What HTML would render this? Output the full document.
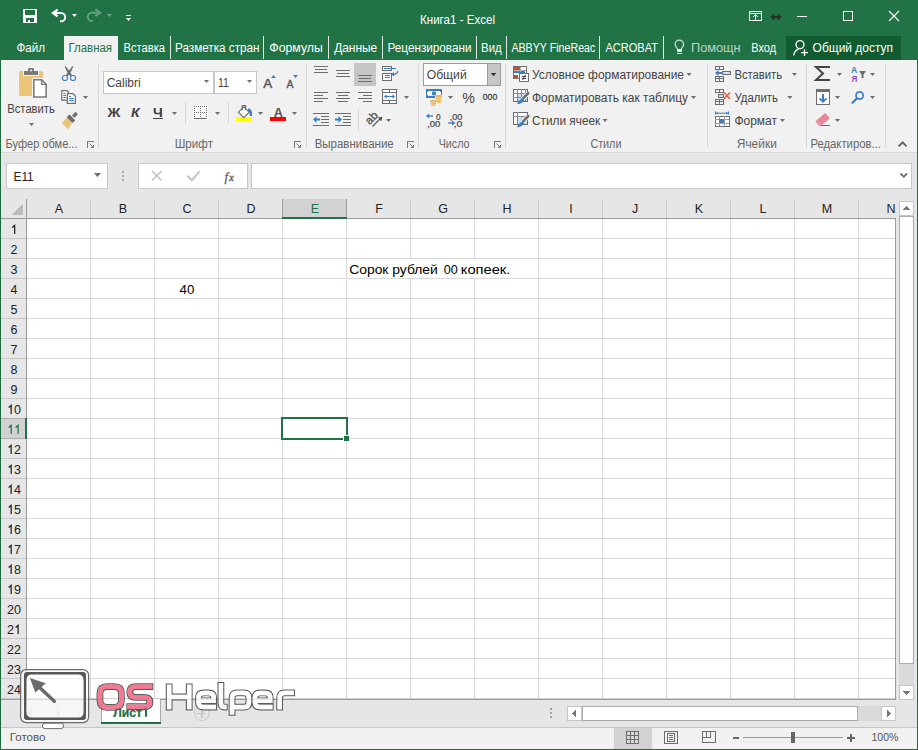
<!DOCTYPE html>
<html><head><meta charset="utf-8"><style>
html,body{margin:0;padding:0;width:918px;height:750px;overflow:hidden;background:#fff}
svg{display:block}
text{font-family:'Liberation Sans', sans-serif;white-space:pre}
</style></head><body>
<svg width="918" height="750" viewBox="0 0 918 750" shape-rendering="crispEdges">
<rect x="0" y="0" width="918" height="60" fill="#217346" />
<rect x="1" y="60" width="916" height="92" fill="#F1F1F1" />
<rect x="1" y="152" width="916" height="1" fill="#D6D6D6" />
<rect x="1" y="153" width="916" height="46" fill="#E6E6E6" />
<rect x="1" y="199" width="916" height="20" fill="#E6E6E6" />
<rect x="1" y="219" width="916" height="480" fill="#E6E6E6" />
<rect x="1" y="699" width="916" height="28" fill="#E6E6E6" />
<rect x="1" y="727" width="916" height="1" fill="#C6C6C6" />
<rect x="1" y="728" width="916" height="21" fill="#F1F1F1" />
<rect x="0" y="60" width="1" height="690" fill="#1E6B40" />
<rect x="917" y="60" width="1" height="690" fill="#1E6B40" />
<rect x="0" y="749" width="918" height="1" fill="#1E6B40" />
<text x="420" y="24" font-size="12" fill="#fff" textLength="75" lengthAdjust="spacingAndGlyphs" >Книга1 - Excel</text>
<rect x="64" y="36" width="54" height="24" fill="#F1F1F1" />
<text x="16.5" y="52" font-size="12" fill="#fff" textLength="28.5" lengthAdjust="spacingAndGlyphs" >Файл</text>
<text x="68.5" y="52" font-size="12" fill="#217346" textLength="43.5" lengthAdjust="spacingAndGlyphs" >Главная</text>
<text x="123.5" y="52" font-size="12" fill="#fff" textLength="41.5" lengthAdjust="spacingAndGlyphs" >Вставка</text>
<text x="175" y="52" font-size="12" fill="#fff" textLength="84.5" lengthAdjust="spacingAndGlyphs" >Разметка стран</text>
<text x="269.3" y="52" font-size="12" fill="#fff" textLength="53.5" lengthAdjust="spacingAndGlyphs" >Формулы</text>
<text x="334.2" y="52" font-size="12" fill="#fff" textLength="43" lengthAdjust="spacingAndGlyphs" >Данные</text>
<text x="387.5" y="52" font-size="12" fill="#fff" textLength="84" lengthAdjust="spacingAndGlyphs" >Рецензировани</text>
<text x="481" y="52" font-size="12" fill="#fff" textLength="20.8" lengthAdjust="spacingAndGlyphs" >Вид</text>
<text x="511.4" y="52" font-size="12" fill="#fff" textLength="84" lengthAdjust="spacingAndGlyphs" >ABBYY FineReac</text>
<text x="605.5" y="52" font-size="12" fill="#fff" textLength="52.5" lengthAdjust="spacingAndGlyphs" >ACROBAT</text>
<rect x="170" y="36" width="1" height="23" fill="rgba(255,255,255,0.85)" />
<rect x="263" y="36" width="1" height="23" fill="rgba(255,255,255,0.85)" />
<rect x="328" y="36" width="1" height="23" fill="rgba(255,255,255,0.85)" />
<rect x="382" y="36" width="1" height="23" fill="rgba(255,255,255,0.85)" />
<rect x="476" y="36" width="1" height="23" fill="rgba(255,255,255,0.85)" />
<rect x="506" y="36" width="1" height="23" fill="rgba(255,255,255,0.85)" />
<rect x="599" y="36" width="1" height="23" fill="rgba(255,255,255,0.85)" />
<rect x="663" y="36" width="1" height="23" fill="rgba(255,255,255,0.85)" />
<text x="691" y="52" font-size="12" fill="rgba(255,255,255,0.7)" textLength="49.5" lengthAdjust="spacingAndGlyphs" >Помощн</text>
<text x="751.3" y="52" font-size="12" fill="#fff" textLength="24.8" lengthAdjust="spacingAndGlyphs" >Вход</text>
<rect x="786" y="36" width="115" height="24" fill="#105C30" />
<text x="812.6" y="52" font-size="12" fill="#fff" textLength="80.5" lengthAdjust="spacingAndGlyphs" >Общий доступ</text>
<rect x="98" y="64" width="1" height="84" fill="#D8D8D8" />
<rect x="306" y="64" width="1" height="84" fill="#D8D8D8" />
<rect x="418" y="64" width="1" height="84" fill="#D8D8D8" />
<rect x="505" y="64" width="1" height="84" fill="#D8D8D8" />
<rect x="707" y="64" width="1" height="84" fill="#D8D8D8" />
<rect x="806" y="64" width="1" height="84" fill="#D8D8D8" />
<rect x="885" y="64" width="1" height="84" fill="#D8D8D8" />
<text x="5.5" y="148" font-size="12" fill="#666666" textLength="72" lengthAdjust="spacingAndGlyphs" >Буфер обме...</text>
<text x="174.7" y="148" font-size="12" fill="#666666" textLength="38.3" lengthAdjust="spacingAndGlyphs" >Шрифт</text>
<text x="314.7" y="148" font-size="12" fill="#666666" textLength="79" lengthAdjust="spacingAndGlyphs" >Выравнивание</text>
<text x="438.7" y="148" font-size="12" fill="#666666" textLength="30.8" lengthAdjust="spacingAndGlyphs" >Число</text>
<text x="590.4" y="148" font-size="12" fill="#666666" textLength="31" lengthAdjust="spacingAndGlyphs" >Стили</text>
<text x="736.8" y="148" font-size="12" fill="#666666" textLength="40" lengthAdjust="spacingAndGlyphs" >Ячейки</text>
<text x="810.4" y="148" font-size="12" fill="#666666" textLength="70.5" lengthAdjust="spacingAndGlyphs" >Редактиров...</text>
<text x="7.3" y="113" font-size="12" fill="#444444" textLength="47.5" lengthAdjust="spacingAndGlyphs" >Вставить</text>
<rect x="103" y="71" width="111" height="23" fill="#C6C6C6" />
<rect x="104" y="72" width="109" height="21" fill="#fff" />
<rect x="214" y="71" width="43" height="23" fill="#C6C6C6" />
<rect x="215" y="72" width="41" height="21" fill="#fff" />
<text x="106.7" y="87" font-size="12" fill="#444444" textLength="34" lengthAdjust="spacingAndGlyphs" >Calibri</text>
<text x="218" y="87" font-size="12" fill="#444444" textLength="11" lengthAdjust="spacingAndGlyphs" >11</text>
<rect x="423" y="63" width="78" height="23" fill="#9B9B9B" />
<rect x="424" y="64" width="63" height="21" fill="#fff" />
<rect x="488" y="64" width="12" height="21" fill="#C6C6C6" />
<text x="426.7" y="79" font-size="12" fill="#444444" textLength="40" lengthAdjust="spacingAndGlyphs" >Общий</text>
<text x="532" y="79" font-size="12" fill="#444444" textLength="152" lengthAdjust="spacingAndGlyphs" >Условное форматирование</text>
<text x="532" y="102" font-size="12" fill="#444444" textLength="156" lengthAdjust="spacingAndGlyphs" >Форматировать как таблицу</text>
<text x="532" y="125" font-size="12" fill="#444444" textLength="68.2" lengthAdjust="spacingAndGlyphs" >Стили ячеек</text>
<text x="734.4" y="79" font-size="12" fill="#444444" textLength="47.6" lengthAdjust="spacingAndGlyphs" >Вставить</text>
<text x="734.4" y="102" font-size="12" fill="#444444" textLength="43.6" lengthAdjust="spacingAndGlyphs" >Удалить</text>
<text x="734.4" y="125" font-size="12" fill="#444444" textLength="42.6" lengthAdjust="spacingAndGlyphs" >Формат</text>
<rect x="6" y="163" width="102" height="26" fill="#C6C6C6" />
<rect x="7" y="164" width="100" height="24" fill="#fff" />
<text x="13.5" y="181" font-size="12" fill="#222" textLength="20.2" lengthAdjust="spacingAndGlyphs" >E11</text>
<rect x="138" y="163" width="110" height="26" fill="#C6C6C6" />
<rect x="139" y="164" width="108" height="24" fill="#fff" />
<rect x="251" y="163" width="661" height="26" fill="#C6C6C6" />
<rect x="252" y="164" width="659" height="24" fill="#fff" />
<rect x="27" y="219" width="868" height="479" fill="#fff" />
<rect x="90" y="219" width="1" height="479" fill="#D9D9D9" />
<rect x="154" y="219" width="1" height="479" fill="#D9D9D9" />
<rect x="218" y="219" width="1" height="479" fill="#D9D9D9" />
<rect x="282" y="219" width="1" height="479" fill="#D9D9D9" />
<rect x="346" y="219" width="1" height="479" fill="#D9D9D9" />
<rect x="410" y="219" width="1" height="40" fill="#D9D9D9" />
<rect x="410" y="278" width="1" height="420" fill="#D9D9D9" />
<rect x="474" y="219" width="1" height="40" fill="#D9D9D9" />
<rect x="474" y="278" width="1" height="420" fill="#D9D9D9" />
<rect x="538" y="219" width="1" height="479" fill="#D9D9D9" />
<rect x="602" y="219" width="1" height="479" fill="#D9D9D9" />
<rect x="666" y="219" width="1" height="479" fill="#D9D9D9" />
<rect x="730" y="219" width="1" height="479" fill="#D9D9D9" />
<rect x="794" y="219" width="1" height="479" fill="#D9D9D9" />
<rect x="858" y="219" width="1" height="479" fill="#D9D9D9" />
<rect x="27" y="238" width="868" height="1" fill="#D9D9D9" />
<rect x="27" y="258" width="868" height="1" fill="#D9D9D9" />
<rect x="27" y="278" width="868" height="1" fill="#D9D9D9" />
<rect x="27" y="298" width="868" height="1" fill="#D9D9D9" />
<rect x="27" y="318" width="868" height="1" fill="#D9D9D9" />
<rect x="27" y="338" width="868" height="1" fill="#D9D9D9" />
<rect x="27" y="358" width="868" height="1" fill="#D9D9D9" />
<rect x="27" y="378" width="868" height="1" fill="#D9D9D9" />
<rect x="27" y="398" width="868" height="1" fill="#D9D9D9" />
<rect x="27" y="418" width="868" height="1" fill="#D9D9D9" />
<rect x="27" y="438" width="868" height="1" fill="#D9D9D9" />
<rect x="27" y="458" width="868" height="1" fill="#D9D9D9" />
<rect x="27" y="478" width="868" height="1" fill="#D9D9D9" />
<rect x="27" y="498" width="868" height="1" fill="#D9D9D9" />
<rect x="27" y="518" width="868" height="1" fill="#D9D9D9" />
<rect x="27" y="538" width="868" height="1" fill="#D9D9D9" />
<rect x="27" y="558" width="868" height="1" fill="#D9D9D9" />
<rect x="27" y="578" width="868" height="1" fill="#D9D9D9" />
<rect x="27" y="598" width="868" height="1" fill="#D9D9D9" />
<rect x="27" y="618" width="868" height="1" fill="#D9D9D9" />
<rect x="27" y="638" width="868" height="1" fill="#D9D9D9" />
<rect x="27" y="658" width="868" height="1" fill="#D9D9D9" />
<rect x="27" y="678" width="868" height="1" fill="#D9D9D9" />
<rect x="90" y="199" width="1" height="19" fill="#C8C8C8" />
<rect x="154" y="199" width="1" height="19" fill="#C8C8C8" />
<rect x="218" y="199" width="1" height="19" fill="#C8C8C8" />
<rect x="282" y="199" width="1" height="19" fill="#C8C8C8" />
<rect x="346" y="199" width="1" height="19" fill="#C8C8C8" />
<rect x="410" y="199" width="1" height="19" fill="#C8C8C8" />
<rect x="474" y="199" width="1" height="19" fill="#C8C8C8" />
<rect x="538" y="199" width="1" height="19" fill="#C8C8C8" />
<rect x="602" y="199" width="1" height="19" fill="#C8C8C8" />
<rect x="666" y="199" width="1" height="19" fill="#C8C8C8" />
<rect x="730" y="199" width="1" height="19" fill="#C8C8C8" />
<rect x="794" y="199" width="1" height="19" fill="#C8C8C8" />
<rect x="858" y="199" width="1" height="19" fill="#C8C8C8" />
<rect x="26" y="199" width="1" height="499" fill="#9B9B9B" />
<rect x="1" y="218" width="894" height="1" fill="#9B9B9B" />
<rect x="1" y="238" width="25" height="1" fill="#C8C8C8" />
<rect x="1" y="258" width="25" height="1" fill="#C8C8C8" />
<rect x="1" y="278" width="25" height="1" fill="#C8C8C8" />
<rect x="1" y="298" width="25" height="1" fill="#C8C8C8" />
<rect x="1" y="318" width="25" height="1" fill="#C8C8C8" />
<rect x="1" y="338" width="25" height="1" fill="#C8C8C8" />
<rect x="1" y="358" width="25" height="1" fill="#C8C8C8" />
<rect x="1" y="378" width="25" height="1" fill="#C8C8C8" />
<rect x="1" y="398" width="25" height="1" fill="#C8C8C8" />
<rect x="1" y="418" width="25" height="1" fill="#C8C8C8" />
<rect x="1" y="438" width="25" height="1" fill="#C8C8C8" />
<rect x="1" y="458" width="25" height="1" fill="#C8C8C8" />
<rect x="1" y="478" width="25" height="1" fill="#C8C8C8" />
<rect x="1" y="498" width="25" height="1" fill="#C8C8C8" />
<rect x="1" y="518" width="25" height="1" fill="#C8C8C8" />
<rect x="1" y="538" width="25" height="1" fill="#C8C8C8" />
<rect x="1" y="558" width="25" height="1" fill="#C8C8C8" />
<rect x="1" y="578" width="25" height="1" fill="#C8C8C8" />
<rect x="1" y="598" width="25" height="1" fill="#C8C8C8" />
<rect x="1" y="618" width="25" height="1" fill="#C8C8C8" />
<rect x="1" y="638" width="25" height="1" fill="#C8C8C8" />
<rect x="1" y="658" width="25" height="1" fill="#C8C8C8" />
<rect x="1" y="678" width="25" height="1" fill="#C8C8C8" />
<rect x="1" y="698" width="25" height="1" fill="#C8C8C8" />
<rect x="895" y="218" width="1" height="481" fill="#9B9B9B" />
<rect x="27" y="698" width="868" height="1" fill="#CFCFCF" />
<rect x="1" y="699" width="895" height="1" fill="#9B9B9B" />
<polygon points="11,215 23,215 23,203" fill="#BDBDBD"/>
<rect x="283" y="199" width="63" height="18" fill="#D2D2D2" />
<rect x="282" y="199" width="1" height="18" fill="#9B9B9B" />
<rect x="346" y="199" width="1" height="18" fill="#9B9B9B" />
<rect x="282" y="217" width="65" height="2" fill="#217346" />
<rect x="1" y="419" width="24" height="19" fill="#D2D2D2" />
<rect x="1" y="418" width="25" height="1" fill="#ABABAB" />
<rect x="1" y="438" width="25" height="1" fill="#ABABAB" />
<rect x="25" y="418" width="2" height="21" fill="#217346" />
<text x="59" y="213" font-size="12.5" fill="#222" text-anchor="middle" >A</text>
<text x="123" y="213" font-size="12.5" fill="#222" text-anchor="middle" >B</text>
<text x="187" y="213" font-size="12.5" fill="#222" text-anchor="middle" >C</text>
<text x="251" y="213" font-size="12.5" fill="#222" text-anchor="middle" >D</text>
<text x="315" y="213" font-size="12.5" fill="#217346" text-anchor="middle" >E</text>
<text x="379" y="213" font-size="12.5" fill="#222" text-anchor="middle" >F</text>
<text x="443" y="213" font-size="12.5" fill="#222" text-anchor="middle" >G</text>
<text x="507" y="213" font-size="12.5" fill="#222" text-anchor="middle" >H</text>
<text x="571" y="213" font-size="12.5" fill="#222" text-anchor="middle" >I</text>
<text x="635" y="213" font-size="12.5" fill="#222" text-anchor="middle" >J</text>
<text x="699" y="213" font-size="12.5" fill="#222" text-anchor="middle" >K</text>
<text x="763" y="213" font-size="12.5" fill="#222" text-anchor="middle" >L</text>
<text x="827" y="213" font-size="12.5" fill="#222" text-anchor="middle" >M</text>
<text x="891" y="213" font-size="12.5" fill="#222" text-anchor="middle" >N</text>
<path d="M14.65,234 V225.41 L12.15,227.54" fill="none" stroke="#222" stroke-width="1.25" shape-rendering="geometricPrecision"/>
<text x="10.52" y="254" font-size="12.5" fill="#222" >2</text>
<text x="10.52" y="274" font-size="12.5" fill="#222" >3</text>
<text x="10.52" y="294" font-size="12.5" fill="#222" >4</text>
<text x="10.52" y="314" font-size="12.5" fill="#222" >5</text>
<text x="10.52" y="334" font-size="12.5" fill="#222" >6</text>
<text x="10.52" y="354" font-size="12.5" fill="#222" >7</text>
<text x="10.52" y="374" font-size="12.5" fill="#222" >8</text>
<text x="10.52" y="394" font-size="12.5" fill="#222" >9</text>
<path d="M11.17,414 V405.41 L8.67,407.54" fill="none" stroke="#222" stroke-width="1.25" shape-rendering="geometricPrecision"/>
<text x="14.0" y="414" font-size="12.5" fill="#222" >0</text>
<path d="M11.17,434 V425.41 L8.67,427.54" fill="none" stroke="#217346" stroke-width="1.25" shape-rendering="geometricPrecision"/>
<path d="M18.12,434 V425.41 L15.62,427.54" fill="none" stroke="#217346" stroke-width="1.25" shape-rendering="geometricPrecision"/>
<path d="M11.17,454 V445.41 L8.67,447.54" fill="none" stroke="#222" stroke-width="1.25" shape-rendering="geometricPrecision"/>
<text x="14.0" y="454" font-size="12.5" fill="#222" >2</text>
<path d="M11.17,474 V465.41 L8.67,467.54" fill="none" stroke="#222" stroke-width="1.25" shape-rendering="geometricPrecision"/>
<text x="14.0" y="474" font-size="12.5" fill="#222" >3</text>
<path d="M11.17,494 V485.41 L8.67,487.54" fill="none" stroke="#222" stroke-width="1.25" shape-rendering="geometricPrecision"/>
<text x="14.0" y="494" font-size="12.5" fill="#222" >4</text>
<path d="M11.17,514 V505.41 L8.67,507.54" fill="none" stroke="#222" stroke-width="1.25" shape-rendering="geometricPrecision"/>
<text x="14.0" y="514" font-size="12.5" fill="#222" >5</text>
<path d="M11.17,534 V525.41 L8.67,527.54" fill="none" stroke="#222" stroke-width="1.25" shape-rendering="geometricPrecision"/>
<text x="14.0" y="534" font-size="12.5" fill="#222" >6</text>
<path d="M11.17,554 V545.41 L8.67,547.54" fill="none" stroke="#222" stroke-width="1.25" shape-rendering="geometricPrecision"/>
<text x="14.0" y="554" font-size="12.5" fill="#222" >7</text>
<path d="M11.17,574 V565.41 L8.67,567.54" fill="none" stroke="#222" stroke-width="1.25" shape-rendering="geometricPrecision"/>
<text x="14.0" y="574" font-size="12.5" fill="#222" >8</text>
<path d="M11.17,594 V585.41 L8.67,587.54" fill="none" stroke="#222" stroke-width="1.25" shape-rendering="geometricPrecision"/>
<text x="14.0" y="594" font-size="12.5" fill="#222" >9</text>
<text x="7.05" y="614" font-size="12.5" fill="#222" >2</text>
<text x="14.0" y="614" font-size="12.5" fill="#222" >0</text>
<text x="7.05" y="634" font-size="12.5" fill="#222" >2</text>
<path d="M18.12,634 V625.41 L15.62,627.54" fill="none" stroke="#222" stroke-width="1.25" shape-rendering="geometricPrecision"/>
<text x="7.05" y="654" font-size="12.5" fill="#222" >2</text>
<text x="14.0" y="654" font-size="12.5" fill="#222" >2</text>
<text x="7.05" y="674" font-size="12.5" fill="#222" >2</text>
<text x="14.0" y="674" font-size="12.5" fill="#222" >3</text>
<text x="7.05" y="694" font-size="12.5" fill="#222" >2</text>
<text x="14.0" y="694" font-size="12.5" fill="#222" >4</text>
<text x="349.2" y="274" font-size="13.5" fill="#000" textLength="88.6" lengthAdjust="spacingAndGlyphs" >Сорок рублей</text>
<text x="443.8" y="274" font-size="13.5" fill="#000" textLength="14" lengthAdjust="spacingAndGlyphs" >00</text>
<text x="460.8" y="274" font-size="13.5" fill="#000" textLength="49.6" lengthAdjust="spacingAndGlyphs" >копеек.</text>
<text x="179.6" y="294" font-size="13" fill="#000" textLength="14.8" lengthAdjust="spacingAndGlyphs" >40</text>
<rect x="281" y="417" width="67" height="2" fill="#217346" />
<rect x="281" y="417" width="2" height="23" fill="#217346" />
<rect x="346" y="417" width="2" height="18" fill="#217346" />
<rect x="281" y="438" width="62" height="2" fill="#217346" />
<rect x="343" y="435" width="7" height="7" fill="#fff" />
<rect x="344" y="436" width="5" height="5" fill="#217346" />
<rect x="899" y="201" width="15" height="15" fill="#C6C6C6" />
<rect x="900" y="202" width="13" height="13" fill="#fff" />
<polygon points="903,210 910,210 906.5,206" fill="#777"/>
<rect x="899" y="216" width="15" height="448" fill="#ABABAB" />
<rect x="900" y="217" width="13" height="446" fill="#fff" />
<rect x="899" y="664" width="15" height="21" fill="#DADADA" />
<rect x="899" y="685" width="15" height="15" fill="#C6C6C6" />
<rect x="900" y="686" width="13" height="13" fill="#fff" />
<polygon points="903,691 910,691 906.5,695" fill="#777"/>
<rect x="101" y="699" width="60" height="24" fill="#fff" />
<rect x="101" y="699" width="1" height="24" fill="#ABABAB" />
<rect x="160" y="699" width="1" height="24" fill="#ABABAB" />
<rect x="101" y="722" width="60" height="2" fill="#217346" />
<text x="113.2" y="716.8" font-size="13" fill="#1E6B3E" textLength="28.8" lengthAdjust="spacingAndGlyphs" font-weight="bold" stroke="#1E6B3E" stroke-width="0.2">Лист</text>
<path d="M146,716.8 V707.6 L143.3,709.6" fill="none" stroke="#1E6B3E" stroke-width="1.9" shape-rendering="geometricPrecision"/>
<circle cx="201.8" cy="713.3" r="7.3" fill="none" stroke="#C8C8C8" shape-rendering="geometricPrecision"/>
<rect x="197.3" y="712.7" width="9" height="1.3" fill="#C8C8C8"/><rect x="201.2" y="708.8" width="1.3" height="9" fill="#C8C8C8"/>
<polygon points="28.6,712.6 31.6,709.6 31.6,715.6" fill="#C8C8C8" shape-rendering="geometricPrecision"/><polygon points="60.2,712.6 57.2,709.6 57.2,715.6" fill="#C8C8C8" shape-rendering="geometricPrecision"/>
<rect x="550" y="708" width="2" height="2" fill="#A0A0A0" />
<rect x="550" y="712" width="2" height="2" fill="#A0A0A0" />
<rect x="550" y="716" width="2" height="2" fill="#A0A0A0" />
<rect x="567" y="706" width="15" height="15" fill="#C6C6C6" />
<rect x="568" y="707" width="13" height="13" fill="#fff" />
<polygon points="575.6,709.6 575.6,717.4 571.6,713.5" fill="#777"/>
<rect x="582" y="706" width="276" height="15" fill="#ABABAB" />
<rect x="583" y="707" width="274" height="13" fill="#fff" />
<rect x="858" y="706" width="23" height="15" fill="#DADADA" />
<rect x="881" y="706" width="15" height="15" fill="#C6C6C6" />
<rect x="882" y="707" width="13" height="13" fill="#fff" />
<polygon points="886.6,709.6 886.6,717.4 890.6,713.5" fill="#777"/>
<text x="9.8" y="740.8" font-size="11.3" fill="#555" textLength="35.6" lengthAdjust="spacingAndGlyphs" >Готово</text>
<rect x="614" y="728" width="38" height="21" fill="#D2D2D2" />
<text x="871.5" y="741" font-size="11.5" fill="#555" textLength="26.8" lengthAdjust="spacingAndGlyphs" >100%</text>
<rect x="743" y="737" width="100" height="1" fill="#999" />
<rect x="791" y="732" width="4" height="11" fill="#666" />
<rect x="733" y="737" width="6" height="2" fill="#666" />
<rect x="847" y="737" width="8" height="2" fill="#666" />
<rect x="850" y="734" width="2" height="8" fill="#666" />
<rect x="23" y="9" width="14" height="14" fill="#fff"/>
<rect x="25" y="10" width="10" height="5" fill="#217346"/>
<rect x="26" y="18" width="8" height="4" fill="#217346"/>
<rect x="28" y="20" width="2" height="2" fill="#fff"/>
<g shape-rendering="geometricPrecision"><path d="M57.6,9.6 L53,13 L57.6,16.4" fill="none" stroke="#fff" stroke-width="2.3" stroke-linejoin="miter"/><path d="M53.5,13 H61 A4.2,4.15 0 0 1 61,21.3 H60" fill="none" stroke="#fff" stroke-width="2"/></g>
<polygon points="72,14 77,14 74.5,17" fill="#fff" shape-rendering="geometricPrecision"/>
<g shape-rendering="geometricPrecision" opacity="0.3"><path d="M95.4,9.4 L100,12.8 L95.4,16.2" fill="none" stroke="#fff" stroke-width="2.3"/><path d="M99.5,12.8 H92 A4.2,4.15 0 0 0 92,21.1 H93" fill="none" stroke="#fff" stroke-width="2"/></g>
<polygon points="107,14 112,14 109.5,17" fill="rgba(255,255,255,0.35)" shape-rendering="geometricPrecision"/>
<rect x="126" y="15" width="5" height="1" fill="#fff"/>
<polygon points="126,18 131,18 128.5,21" fill="#fff" shape-rendering="geometricPrecision"/>
<rect x="749" y="11" width="13" height="1" fill="#fff"/><rect x="749" y="20" width="13" height="1" fill="#fff"/><rect x="749" y="11" width="1" height="10" fill="#fff"/><rect x="761" y="11" width="1" height="10" fill="#fff"/>
<rect x="749" y="13" width="13" height="1" fill="#fff"/>
<rect x="755" y="15" width="1" height="6" fill="#fff"/>
<path d="M753,17 L755.5,14.6 L758,17" fill="none" stroke="#fff" stroke-width="1" shape-rendering="geometricPrecision"/>
<g shape-rendering="geometricPrecision" fill="#2B2B2B"><polygon points="770.5,17 774.2,13.6 774.2,20.4"/><polygon points="781.5,17 777.8,13.6 777.8,20.4"/><rect x="773.5" y="16" width="5" height="2"/></g>
<rect x="797" y="16" width="10" height="1" fill="#fff"/>
<rect x="843.5" y="11.5" width="9" height="9" fill="none" stroke="#fff" stroke-width="1"/>
<path d="M889,11 L899,21 M899,11 L889,21" stroke="#fff" stroke-width="1.1" shape-rendering="geometricPrecision"/>
<g shape-rendering="geometricPrecision" fill="none" stroke="rgba(255,255,255,0.8)" stroke-width="1.2"><path d="M677.6,49.6 C677.3,47.6 675.1,46.6 675.1,44.4 A4.25,4.25 0 0 1 683.6,44.4 C683.6,46.6 681.4,47.6 681.1,49.6 Z"/></g>
<rect x="677.2" y="49.4" width="4.3" height="2.3" fill="rgba(255,255,255,0.8)"/><rect x="677.3" y="53" width="4.2" height="1.1" fill="rgba(255,255,255,0.8)"/>
<g shape-rendering="geometricPrecision" fill="none" stroke="#fff" stroke-width="1.3"><circle cx="800" cy="44.6" r="4"/><path d="M793.8,55.6 A7,7 0 0 1 798.6,49.1"/><path d="M804.5,49.2 V56 M801,52.6 H808"/></g>
<g shape-rendering="geometricPrecision"><rect x="19" y="71" width="24" height="25" rx="1.5" fill="#EBC47A"/><rect x="23" y="69.5" width="16" height="6.5" fill="#F4F4F4"/><rect x="24" y="71" width="14" height="4" fill="#7A7A7A"/><rect x="28" y="68" width="6" height="4" rx="1.2" fill="#7A7A7A"/><rect x="30.3" y="69.6" width="1.6" height="1.6" fill="#fff"/><rect x="32" y="78" width="16" height="21" fill="#F4F4F4"/><path d="M33.8,79.8 H41.6 L46.2,84.4 V97 H33.8 Z" fill="#fff" stroke="#7A7A7A" stroke-width="1.6"/><path d="M41.6,79.8 V84.4 H46.2" fill="none" stroke="#7A7A7A" stroke-width="1.4"/></g>
<polygon points="29,123 34,123 31.5,126" fill="#6D6D6D" shape-rendering="geometricPrecision"/>
<g shape-rendering="geometricPrecision"><path d="M64.6,66.6 Q65.4,65.9 65.9,66.4 Q69.5,70.5 72,75.3 L70.2,76.2 Q66.2,71.5 64.6,66.6 Z" fill="#6D6D6D"/><path d="M73.4,66.6 Q72.6,65.9 72.1,66.4 Q68.5,70.5 66,75.3 L67.8,76.2 Q71.8,71.5 73.4,66.6 Z" fill="#6D6D6D"/><circle cx="65" cy="78" r="2.55" fill="none" stroke="#4A7EBB" stroke-width="1.15"/><circle cx="73" cy="78" r="2.55" fill="none" stroke="#4A7EBB" stroke-width="1.15"/></g>
<g shape-rendering="geometricPrecision"><path d="M61.8,90.6 H67 L68.5,92 V100.2 H61.8 Z" fill="#fff" stroke="#6D6D6D" stroke-width="1.2"/><rect x="63.3" y="93" width="2.2" height="1" fill="#3C7EC1"/><rect x="63.3" y="95" width="3" height="1" fill="#3C7EC1"/><rect x="63.3" y="97" width="3" height="1" fill="#3C7EC1"/><path d="M67.4,93.6 H73 L75.4,96 V103.4 H67.4 Z" fill="#fff" stroke="#6D6D6D" stroke-width="1.2"/><rect x="69" y="96" width="2.2" height="1" fill="#3C7EC1"/><rect x="69" y="98" width="4.8" height="1" fill="#3C7EC1"/><rect x="69" y="100" width="4.8" height="1" fill="#3C7EC1"/></g>
<polygon points="83,96 88,96 85.5,99" fill="#6D6D6D" shape-rendering="geometricPrecision"/>
<g shape-rendering="geometricPrecision" transform="translate(71,118.8) rotate(-45)"><polygon points="-2.2,-3.8 -2.2,3.8 -9.6,5.6 -9.6,-3.6" fill="#EAC37A"/><rect x="-2" y="-4.2" width="4" height="8.4" rx="1" fill="#6D6D6D"/><rect x="3" y="-1.7" width="5.2" height="3.4" rx="0.8" fill="#6D6D6D"/></g>
<polygon points="204,80 209,80 206.5,83" fill="#6D6D6D" shape-rendering="geometricPrecision"/>
<polygon points="247,80 252,80 249.5,83" fill="#6D6D6D" shape-rendering="geometricPrecision"/>
<text x="263.2" y="88" font-size="13.5" fill="#555" stroke="#555" stroke-width="0.45" textLength="9" lengthAdjust="spacingAndGlyphs">A</text>
<polygon points="271,78 276,78 273.5,75" fill="#3C7EC1" shape-rendering="geometricPrecision"/>
<text x="286.4" y="88" font-size="11" fill="#555" stroke="#555" stroke-width="0.4" textLength="7" lengthAdjust="spacingAndGlyphs">A</text>
<polygon points="293,75 298,75 295.5,78" fill="#3C7EC1" shape-rendering="geometricPrecision"/>
<text x="107.5" y="117" font-size="13" font-weight="bold" fill="#404040" textLength="12.8" lengthAdjust="spacingAndGlyphs">Ж</text>
<text x="131" y="117" font-size="13" font-weight="bold" font-style="italic" fill="#404040" textLength="8.6" lengthAdjust="spacingAndGlyphs">К</text>
<text x="153" y="117" font-size="13" font-weight="bold" fill="#404040" textLength="9.8" lengthAdjust="spacingAndGlyphs">Ч</text>
<rect x="153" y="118" width="10" height="1" fill="#404040"/>
<polygon points="172,112 177,112 174.5,115" fill="#6D6D6D" shape-rendering="geometricPrecision"/>
<rect x="185" y="102" width="1" height="22" fill="#D8D8D8"/>
<rect x="228" y="102" width="1" height="22" fill="#D8D8D8"/>
<rect x="193" y="105" width="15" height="15" fill="#FAFAFA"/>
<rect x="194" y="106" width="1" height="1" fill="#6D6D6D"/>
<rect x="196" y="106" width="1" height="1" fill="#6D6D6D"/>
<rect x="198" y="106" width="1" height="1" fill="#6D6D6D"/>
<rect x="200" y="106" width="1" height="1" fill="#6D6D6D"/>
<rect x="202" y="106" width="1" height="1" fill="#6D6D6D"/>
<rect x="204" y="106" width="1" height="1" fill="#6D6D6D"/>
<rect x="206" y="106" width="1" height="1" fill="#6D6D6D"/>
<rect x="194" y="112" width="1" height="1" fill="#6D6D6D"/>
<rect x="196" y="112" width="1" height="1" fill="#6D6D6D"/>
<rect x="198" y="112" width="1" height="1" fill="#6D6D6D"/>
<rect x="200" y="112" width="1" height="1" fill="#6D6D6D"/>
<rect x="202" y="112" width="1" height="1" fill="#6D6D6D"/>
<rect x="204" y="112" width="1" height="1" fill="#6D6D6D"/>
<rect x="206" y="112" width="1" height="1" fill="#6D6D6D"/>
<rect x="194" y="108" width="1" height="1" fill="#6D6D6D"/>
<rect x="200" y="108" width="1" height="1" fill="#6D6D6D"/>
<rect x="206" y="108" width="1" height="1" fill="#6D6D6D"/>
<rect x="194" y="110" width="1" height="1" fill="#6D6D6D"/>
<rect x="200" y="110" width="1" height="1" fill="#6D6D6D"/>
<rect x="206" y="110" width="1" height="1" fill="#6D6D6D"/>
<rect x="194" y="114" width="1" height="1" fill="#6D6D6D"/>
<rect x="200" y="114" width="1" height="1" fill="#6D6D6D"/>
<rect x="206" y="114" width="1" height="1" fill="#6D6D6D"/>
<rect x="194" y="116" width="1" height="1" fill="#6D6D6D"/>
<rect x="200" y="116" width="1" height="1" fill="#6D6D6D"/>
<rect x="206" y="116" width="1" height="1" fill="#6D6D6D"/>
<rect x="194" y="118" width="13" height="1" fill="#6D6D6D"/>
<polygon points="215,112 220,112 217.5,115" fill="#6D6D6D" shape-rendering="geometricPrecision"/>
<rect x="236" y="117" width="16" height="4" fill="#FFFF00"/>
<g shape-rendering="geometricPrecision"><path d="M243.8,106.8 L249.2,112.2 L243.8,117.6 L238.4,112.2 Z" fill="#fff" stroke="#6D6D6D" stroke-width="1.1"/><path d="M242.2,110.5 V105.6 H245.6 V110" fill="none" stroke="#6D6D6D" stroke-width="1.2"/><path d="M248.2,108.2 Q253.2,109.5 252,116 L249.8,116 Q250.2,112.5 247.6,111.2 Z" fill="#3C7EC1"/></g>
<polygon points="258,112 263,112 260.5,115" fill="#6D6D6D" shape-rendering="geometricPrecision"/>
<rect x="270" y="117" width="16" height="4" fill="#FF0000"/>
<text x="273.8" y="116.6" font-size="13.5" font-weight="bold" fill="#555" textLength="9.2" lengthAdjust="spacingAndGlyphs">A</text>
<polygon points="292,112 297,112 294.5,115" fill="#6D6D6D" shape-rendering="geometricPrecision"/>
<rect x="354" y="63" width="22" height="23" fill="#C6C6C6"/>
<rect x="314" y="66" width="14" height="1" fill="#6D6D6D"/>
<rect x="315" y="69" width="12" height="1" fill="#6D6D6D"/>
<rect x="314" y="72" width="14" height="1" fill="#6D6D6D"/>
<rect x="336" y="70" width="14" height="1" fill="#6D6D6D"/>
<rect x="337" y="73" width="12" height="1" fill="#6D6D6D"/>
<rect x="336" y="76" width="14" height="1" fill="#6D6D6D"/>
<rect x="358" y="75" width="14" height="1" fill="#6D6D6D"/>
<rect x="359" y="78" width="12" height="1" fill="#6D6D6D"/>
<rect x="358" y="81" width="14" height="1" fill="#6D6D6D"/>
<rect x="382.5" y="66.5" width="9" height="4" fill="#fff" stroke="#6D6D6D" stroke-width="1"/>
<rect x="382.5" y="73.5" width="9" height="7" fill="#fff" stroke="#6D6D6D" stroke-width="1"/>
<rect x="384" y="68" width="12" height="1" fill="#3C7EC1"/>
<rect x="384.5" y="75" width="5" height="1" fill="#3C7EC1"/><rect x="384.5" y="77" width="5" height="1" fill="#3C7EC1"/>
<g shape-rendering="geometricPrecision"><path d="M397.6,71 Q397.6,74.3 393,74.3" fill="none" stroke="#3C7EC1" stroke-width="1.2"/><polygon points="391,74.3 394,72 394,76.6" fill="#3C7EC1"/></g>
<rect x="314" y="92" width="14" height="1" fill="#6D6D6D"/>
<rect x="314" y="95" width="9" height="1" fill="#6D6D6D"/>
<rect x="314" y="98" width="14" height="1" fill="#6D6D6D"/>
<rect x="314" y="101" width="9" height="1" fill="#6D6D6D"/>
<rect x="336" y="92" width="14" height="1" fill="#6D6D6D"/>
<rect x="338" y="95" width="10" height="1" fill="#6D6D6D"/>
<rect x="336" y="98" width="14" height="1" fill="#6D6D6D"/>
<rect x="338" y="101" width="10" height="1" fill="#6D6D6D"/>
<rect x="358" y="92" width="14" height="1" fill="#6D6D6D"/>
<rect x="363" y="95" width="9" height="1" fill="#6D6D6D"/>
<rect x="358" y="98" width="14" height="1" fill="#6D6D6D"/>
<rect x="363" y="101" width="9" height="1" fill="#6D6D6D"/>
<rect x="382" y="89" width="15" height="15" fill="#6D6D6D"/><rect x="383" y="90" width="13" height="2" fill="#fff"/><rect x="383" y="93" width="13" height="7" fill="#fff"/><rect x="383" y="101" width="13" height="2" fill="#fff"/>
<rect x="389" y="90" width="1" height="2" fill="#6D6D6D"/><rect x="389" y="101" width="1" height="2" fill="#6D6D6D"/>
<g shape-rendering="geometricPrecision" fill="#3C7EC1"><rect x="385.5" y="95.9" width="8" height="1.2"/><polygon points="384,96.5 386.5,94.3 386.5,98.7"/><polygon points="395,96.5 392.5,94.3 392.5,98.7"/></g>
<polygon points="404,96 409,96 406.5,99" fill="#6D6D6D" shape-rendering="geometricPrecision"/>
<rect x="313" y="113" width="16" height="1" fill="#6D6D6D"/><rect x="313" y="125" width="16" height="1" fill="#6D6D6D"/>
<rect x="321" y="116" width="8" height="1" fill="#6D6D6D"/>
<rect x="321" y="119" width="8" height="1" fill="#6D6D6D"/>
<rect x="321" y="122" width="8" height="1" fill="#6D6D6D"/>
<g shape-rendering="geometricPrecision" fill="#3C7EC1"><polygon points="313,119.5 316.5,116.3 316.5,122.7"/><rect x="316" y="118.5" width="4" height="2"/></g>
<rect x="335" y="113" width="16" height="1" fill="#6D6D6D"/><rect x="335" y="125" width="16" height="1" fill="#6D6D6D"/>
<rect x="343" y="116" width="8" height="1" fill="#6D6D6D"/>
<rect x="343" y="119" width="8" height="1" fill="#6D6D6D"/>
<rect x="343" y="122" width="8" height="1" fill="#6D6D6D"/>
<g shape-rendering="geometricPrecision" fill="#3C7EC1"><polygon points="342,119.5 338.5,116.3 338.5,122.7"/><rect x="335" y="118.5" width="4" height="2"/></g>
<rect x="358" y="109" width="1" height="22" fill="#D8D8D8"/>
<text x="0" y="0" font-size="11.5" fill="#505050" stroke="#505050" stroke-width="0.3" transform="translate(369.8,125.2) rotate(-47)">ab</text>
<g shape-rendering="geometricPrecision"><path d="M372.5,126.5 L381.5,117.5" stroke="#555" stroke-width="1.1"/><polygon points="382.3,116.7 377.8,117.6 381.4,121.2" fill="#555"/></g>
<polygon points="386,119 391,119 388.5,122" fill="#6D6D6D" shape-rendering="geometricPrecision"/>
<polygon points="490.7,73 496.3,73 493.5,76.3" fill="#333" shape-rendering="geometricPrecision"/>
<rect x="426" y="89" width="16" height="9" fill="#3C7EC1"/><rect x="428" y="91" width="12" height="5" fill="#fff"/><rect x="427" y="92" width="14" height="3" fill="#fff"/>
<circle cx="434" cy="93.4" r="2.2" fill="#3C7EC1" shape-rendering="geometricPrecision"/>
<rect x="434.5" y="94.5" width="8.5" height="9" fill="#F1F1F1"/><rect x="429.5" y="99.5" width="8" height="6.5" fill="#F1F1F1"/>
<g shape-rendering="geometricPrecision"><ellipse cx="438.6" cy="96.2" rx="3.6" ry="1.4" fill="#E8BD6A"/><ellipse cx="438.6" cy="98.6" rx="3.2" ry="1" fill="#E8BD6A"/><ellipse cx="438.8" cy="100.6" rx="3" ry="0.9" fill="#E8BD6A"/><ellipse cx="439" cy="102.3" rx="2.5" ry="0.8" fill="#E8BD6A"/>
<ellipse cx="433.4" cy="101.2" rx="3.6" ry="1.4" fill="#E8BD6A"/><ellipse cx="433.4" cy="103.4" rx="3.1" ry="0.9" fill="#E8BD6A"/><ellipse cx="433.4" cy="105.1" rx="2.8" ry="0.8" fill="#E8BD6A"/></g>
<polygon points="448,96 453,96 450.5,99" fill="#6D6D6D" shape-rendering="geometricPrecision"/>
<text x="462.3" y="103" font-size="14.5" fill="#444" textLength="12.6" lengthAdjust="spacingAndGlyphs">%</text>
<text x="482.8" y="100.3" font-size="9.6" fill="#444" stroke="#444" stroke-width="0.3" textLength="14.4" lengthAdjust="spacingAndGlyphs">000</text>
<text x="436" y="119.8" font-size="8.8" fill="#444" stroke="#444" stroke-width="0.2" lengthAdjust="spacingAndGlyphs" textLength="4.6">0</text>
<text x="427.2" y="126.8" font-size="8.8" fill="#444" stroke="#444" stroke-width="0.2" lengthAdjust="spacingAndGlyphs" textLength="13.2">,00</text>
<g shape-rendering="geometricPrecision" fill="#3C7EC1"><polygon points="426,116 429.2,113.4 429.2,118.6"/><rect x="428.5" y="115.4" width="4.5" height="1.3"/></g>
<text x="449.8" y="119.8" font-size="8.8" fill="#444" stroke="#444" stroke-width="0.2" lengthAdjust="spacingAndGlyphs" textLength="12.6">,00</text>
<text x="453.6" y="126.8" font-size="8.8" fill="#444" stroke="#444" stroke-width="0.2" lengthAdjust="spacingAndGlyphs" textLength="8.8">,0</text>
<g shape-rendering="geometricPrecision" fill="#3C7EC1"><polygon points="455.3,123 452,120.4 452,125.6"/><rect x="448" y="122.4" width="4.5" height="1.3"/></g>
<rect x="513.5" y="66.5" width="13" height="12" fill="#fff" stroke="#6D6D6D" stroke-width="1"/>
<rect x="514" y="67" width="6" height="3" fill="#D24726"/><rect x="514" y="71" width="11" height="2" fill="#3C7EC1"/><rect x="514" y="75" width="4" height="3" fill="#D24726"/>
<rect x="520" y="66.5" width="1" height="5" fill="#B0B0B0"/><rect x="514" y="70" width="12" height="1" fill="#B0B0B0"/>
<rect x="519.5" y="73.5" width="9" height="8" fill="#fff" stroke="#6D6D6D" stroke-width="1"/>
<g shape-rendering="geometricPrecision"><path d="M521.8,76.5 H526.2 M521.8,78.5 H526.2 M525.3,75 L522.7,80" stroke="#333" stroke-width="0.9"/></g>
<rect x="513.5" y="89.5" width="14" height="12" fill="#fff" stroke="#6D6D6D" stroke-width="1"/>
<rect x="517" y="93" width="10" height="8" fill="#C5DCF0"/>
<rect x="517" y="89" width="1" height="12" fill="#8A8A8A"/>
<rect x="521" y="89" width="1" height="12" fill="#8A8A8A"/>
<rect x="525" y="89" width="1" height="12" fill="#8A8A8A"/>
<rect x="513" y="93" width="14" height="1" fill="#8A8A8A"/>
<rect x="513" y="97" width="14" height="1" fill="#8A8A8A"/>
<g shape-rendering="geometricPrecision"><path d="M528.5,93 L522.5,99" stroke="#F1F1F1" stroke-width="4.5"/><path d="M528.3,93.2 L523.3,98.2" stroke="#6D6D6D" stroke-width="2.6" stroke-linecap="round"/><path d="M522.8,98.4 Q519.5,99 516.8,104.2 Q521.5,104 524.3,100.2 Z" fill="#3C7EC1"/></g>
<rect x="513.5" y="112.5" width="14" height="12" fill="#fff" stroke="#6D6D6D" stroke-width="1"/>
<rect x="517" y="116" width="10" height="8" fill="#C5DCF0"/>
<rect x="517" y="112" width="1" height="12" fill="#8A8A8A"/><rect x="513" y="116" width="14" height="1" fill="#8A8A8A"/>
<g shape-rendering="geometricPrecision"><path d="M528.5,116 L522.5,122" stroke="#F1F1F1" stroke-width="4.5"/><path d="M528.3,116.2 L523.3,121.2" stroke="#6D6D6D" stroke-width="2.6" stroke-linecap="round"/><path d="M522.8,121.4 Q519.5,122 516.8,127.2 Q521.5,127 524.3,123.2 Z" fill="#3C7EC1"/></g>
<polygon points="686.5,73 691.5,73 689.0,76" fill="#6D6D6D" shape-rendering="geometricPrecision"/>
<polygon points="691,96 696,96 693.5,99" fill="#6D6D6D" shape-rendering="geometricPrecision"/>
<polygon points="602.5,119 607.5,119 605.0,122" fill="#6D6D6D" shape-rendering="geometricPrecision"/>
<g fill="none" stroke="#6D6D6D" stroke-width="1"><rect x="715.5" y="66.5" width="8" height="3"/><rect x="719.5" y="66.5" width="0.01" height="3"/><rect x="715.5" y="76.5" width="8" height="5"/><rect x="715.5" y="78.5" width="8" height="0.01"/><rect x="719.5" y="76.5" width="0.01" height="5"/><rect x="722.5" y="71.5" width="8" height="3"/></g>
<rect x="723" y="72" width="3" height="2" fill="#C5DCF0"/><rect x="727" y="72" width="3" height="2" fill="#C5DCF0"/>
<g shape-rendering="geometricPrecision" fill="#3C7EC1"><polygon points="715,73 718.5,70 718.5,76"/><rect x="718" y="72" width="4.5" height="2"/></g>
<g fill="none" stroke="#6D6D6D" stroke-width="1"><rect x="715.5" y="89.5" width="8" height="3"/><rect x="719.5" y="89.5" width="0.01" height="3"/><rect x="715.5" y="99.5" width="8" height="5"/><rect x="715.5" y="101.5" width="8" height="0.01"/><rect x="719.5" y="99.5" width="0.01" height="5"/><rect x="718.5" y="94.5" width="5" height="3"/></g>
<rect x="719" y="95" width="4" height="2" fill="#C5DCF0"/>
<path d="M724,92.5 L730,99 M730,92.5 L724,99" stroke="#E0603A" stroke-width="1.6" shape-rendering="geometricPrecision"/>
<g shape-rendering="geometricPrecision"><rect x="716" y="112.7" width="12" height="1" fill="#3C7EC1"/><rect x="715" y="111.5" width="1" height="3" fill="#3C7EC1"/><rect x="728" y="111.5" width="1" height="3" fill="#3C7EC1"/><polygon points="716,113.2 718,111.8 718,114.6" fill="#3C7EC1"/><polygon points="728,113.2 726,111.8 726,114.6" fill="#3C7EC1"/></g>
<rect x="715.5" y="116.5" width="14" height="10" fill="#fff" stroke="#6D6D6D" stroke-width="1"/>
<rect x="719" y="116" width="1" height="10" fill="#A0A0A0"/>
<rect x="724" y="116" width="1" height="10" fill="#A0A0A0"/>
<rect x="715" y="119" width="14" height="1" fill="#A0A0A0"/>
<rect x="715" y="123" width="14" height="1" fill="#A0A0A0"/>
<rect x="719" y="119" width="5" height="4" fill="#3C7EC1"/>
<polygon points="792,73 797,73 794.5,76" fill="#6D6D6D" shape-rendering="geometricPrecision"/>
<polygon points="787.4,96 792.4,96 789.9,99" fill="#6D6D6D" shape-rendering="geometricPrecision"/>
<polygon points="780,119 785,119 782.5,122" fill="#6D6D6D" shape-rendering="geometricPrecision"/>
<path d="M830,67 H816 L823,73.5 L816,80 H830" fill="none" stroke="#444" stroke-width="2" stroke-linejoin="miter" shape-rendering="geometricPrecision"/>
<polygon points="837,73 842,73 839.5,76" fill="#6D6D6D" shape-rendering="geometricPrecision"/>
<text x="851" y="73" font-size="9" font-weight="bold" fill="#3C7EC1" textLength="6.2" lengthAdjust="spacingAndGlyphs">А</text>
<text x="851.5" y="82" font-size="9" font-weight="bold" fill="#8E4FB0" textLength="5.8" lengthAdjust="spacingAndGlyphs">Я</text>
<polygon points="859,71 866,71 863.5,74.5 863.5,78 861.5,78 861.5,74.5" fill="#6D6D6D" shape-rendering="geometricPrecision"/>
<polygon points="870,73 875,73 872.5,76" fill="#6D6D6D" shape-rendering="geometricPrecision"/>
<rect x="816.5" y="89.5" width="13" height="15" fill="#fff" stroke="#6D6D6D" stroke-width="1"/><rect x="816" y="89" width="14" height="3" fill="#6D6D6D"/>
<g shape-rendering="geometricPrecision"><path d="M823,94 V101" stroke="#3C7EC1" stroke-width="2"/><path d="M819.5,98.3 L823,101.8 L826.5,98.3" fill="none" stroke="#3C7EC1" stroke-width="1.8"/></g>
<polygon points="835,96 840,96 837.5,99" fill="#6D6D6D" shape-rendering="geometricPrecision"/>
<g shape-rendering="geometricPrecision"><circle cx="859.6" cy="95.5" r="3.6" fill="none" stroke="#3C7EC1" stroke-width="1.7"/><path d="M857,98.2 L852.5,102.7" stroke="#3C7EC1" stroke-width="2.2" stroke-linecap="round"/></g>
<polygon points="870,96 875,96 872.5,99" fill="#6D6D6D" shape-rendering="geometricPrecision"/>
<g shape-rendering="geometricPrecision" transform="translate(823,119.5) rotate(-40)"><rect x="-7" y="-3.5" width="13" height="7" rx="1" fill="#E8859A"/><rect x="-7" y="-3.5" width="3" height="7" fill="#E497A7"/></g>
<rect x="821" y="125" width="9" height="1" fill="#6D6D6D"/>
<polygon points="835,119 840,119 837.5,122" fill="#6D6D6D" shape-rendering="geometricPrecision"/>
<path d="M898.6,146.4 L902.6,142.4 L906.6,146.4" fill="none" stroke="#666" stroke-width="2" shape-rendering="geometricPrecision"/>
<path d="M87.5,148 V141.5 H93.5" fill="none" stroke="#7A7A7A" stroke-width="1"/>
<path d="M89.5,143.5 L93.5,147.5 M93.5,145 V147.5 H91" fill="none" stroke="#7A7A7A" stroke-width="1" shape-rendering="geometricPrecision"/>
<path d="M294.5,148 V141.5 H300.5" fill="none" stroke="#7A7A7A" stroke-width="1"/>
<path d="M296.5,143.5 L300.5,147.5 M300.5,145 V147.5 H298" fill="none" stroke="#7A7A7A" stroke-width="1" shape-rendering="geometricPrecision"/>
<path d="M407.5,148 V141.5 H413.5" fill="none" stroke="#7A7A7A" stroke-width="1"/>
<path d="M409.5,143.5 L413.5,147.5 M413.5,145 V147.5 H411" fill="none" stroke="#7A7A7A" stroke-width="1" shape-rendering="geometricPrecision"/>
<path d="M494.5,148 V141.5 H500.5" fill="none" stroke="#7A7A7A" stroke-width="1"/>
<path d="M496.5,143.5 L500.5,147.5 M500.5,145 V147.5 H498" fill="none" stroke="#7A7A7A" stroke-width="1" shape-rendering="geometricPrecision"/>
<polygon points="94,173 101,173 97.5,177" fill="#6D6D6D" shape-rendering="geometricPrecision"/>
<rect x="122" y="171" width="2" height="2" fill="#ABABAB"/>
<rect x="122" y="175" width="2" height="2" fill="#ABABAB"/>
<rect x="122" y="179" width="2" height="2" fill="#ABABAB"/>
<path d="M152,171 L161.5,180.5 M161.5,171 L152,180.5" stroke="#C4C4C4" stroke-width="1.7" shape-rendering="geometricPrecision"/>
<path d="M187.5,175.8 L191.8,180.2 L199.6,171.4" fill="none" stroke="#C4C4C4" stroke-width="2" shape-rendering="geometricPrecision"/>
<text x="224.5" y="180.5" font-size="13" font-style="italic" style="font-family:'Liberation Serif'" fill="#555" stroke="#555" stroke-width="0.25">f</text>
<text x="229.2" y="180.5" font-size="10" font-style="italic" style="font-family:'Liberation Serif'" fill="#555" stroke="#555" stroke-width="0.35">x</text>
<path d="M900.5,173.5 L903.8,176.8 L907,173.5" fill="none" stroke="#6D6D6D" stroke-width="1.8" shape-rendering="geometricPrecision"/>
<rect x="626" y="731" width="13" height="13" fill="#6D6D6D"/>
<rect x="627" y="732" width="3" height="3" fill="#D8D8D8"/>
<rect x="627" y="736" width="3" height="3" fill="#D8D8D8"/>
<rect x="627" y="740" width="3" height="3" fill="#D8D8D8"/>
<rect x="631" y="732" width="3" height="3" fill="#D8D8D8"/>
<rect x="631" y="736" width="3" height="3" fill="#D8D8D8"/>
<rect x="631" y="740" width="3" height="3" fill="#D8D8D8"/>
<rect x="635" y="732" width="3" height="3" fill="#D8D8D8"/>
<rect x="635" y="736" width="3" height="3" fill="#D8D8D8"/>
<rect x="635" y="740" width="3" height="3" fill="#D8D8D8"/>
<rect x="664.5" y="731.5" width="13" height="12" fill="none" stroke="#6D6D6D" stroke-width="1"/>
<rect x="667.5" y="733.5" width="7" height="8" fill="none" stroke="#6D6D6D" stroke-width="1"/>
<rect x="669" y="735" width="4" height="1" fill="#6D6D6D"/>
<rect x="669" y="737" width="4" height="1" fill="#6D6D6D"/>
<rect x="669" y="739" width="4" height="1" fill="#6D6D6D"/>
<path d="M702.5,742.5 V731.5 H715.5 V742.5 Z M702.5,737.5 H710.5 V731.5 M706.5,731.5 V737.5" fill="none" stroke="#6D6D6D" stroke-width="1"/>
<g shape-rendering="geometricPrecision"><rect x="20.6" y="669.6" width="68" height="53" rx="5.5" fill="rgba(255,255,255,0.62)" stroke="#6A6A6A" stroke-width="1.2"/><path fill-rule="evenodd" fill="#585858" d="M27,672 H83 Q86,672 86,675 V717 Q86,720 83,720 H27 Q24,720 24,717 V675 Q24,672 27,672 Z M32,674.4 H78 Q83.6,674.4 83.6,680 V712 Q83.6,717.6 78,717.6 H32 Q26.4,717.6 26.4,712 V680 Q26.4,674.4 32,674.4 Z"/><polygon points="29.9,677.9 45.8,683.2 35.3,692.5" fill="#6A6A6A"/><path d="M38,686 L54.3,701.3" stroke="#6A6A6A" stroke-width="3.4" stroke-linecap="round"/><rect x="42.4" y="723.2" width="21.2" height="5.4" rx="2.7" fill="#fff" stroke="#6A6A6A" stroke-width="1"/></g>
<defs><mask id="wm" maskUnits="userSpaceOnUse" x="0" y="600" width="400" height="150"><rect x="0" y="600" width="400" height="150" fill="#fff"/><path d="M107,686.65 H114.45 Q121.45,686.65 121.45,693.65 V700.3 Q121.45,707.3 114.45,707.3 H107 Q99.95,707.3 99.95,700.3 V693.65 Q99.95,686.65 107,686.65 Z M149.95,686.65 H135.75 Q129.75,686.65 129.75,692 Q129.75,697.4 135.75,697.4 H144 Q149.95,697.4 149.95,702 Q149.95,706.75 144,706.75 H129.75 M169.15,686.85 V707.05 M189.2,686.85 V707.05 M169.15,697 H189.2 M201.5,700.8 H213.75 V698 Q213.75,692.95 208.7,692.95 H203.5 Q198.45,692.95 198.45,698 V702 Q198.45,707.05 203.5,707.05 H213.75 M220.9,685.35 V702.5 Q220.9,707.05 224.3,707.05 M232.05,712.25 V698 Q232.05,692.85 237,692.85 H244 Q248.95,692.85 248.95,698 V702 Q248.95,707.15 244,707.15 H232.05 M258,700.8 H270.25 V698 Q270.25,692.95 265.2,692.95 H260 Q254.95,692.95 254.95,698 V702 Q254.95,707.05 260,707.05 H270.25 M279.65,707.15 V698 Q279.65,692.85 284.7,692.85 H291.65" fill="none" stroke="#000" stroke-width="4.4" stroke-linecap="square" shape-rendering="geometricPrecision"/></mask></defs>
<path d="M107,686.65 H114.45 Q121.45,686.65 121.45,693.65 V700.3 Q121.45,707.3 114.45,707.3 H107 Q99.95,707.3 99.95,700.3 V693.65 Q99.95,686.65 107,686.65 Z M149.95,686.65 H135.75 Q129.75,686.65 129.75,692 Q129.75,697.4 135.75,697.4 H144 Q149.95,697.4 149.95,702 Q149.95,706.75 144,706.75 H129.75 M169.15,686.85 V707.05 M189.2,686.85 V707.05 M169.15,697 H189.2 M201.5,700.8 H213.75 V698 Q213.75,692.95 208.7,692.95 H203.5 Q198.45,692.95 198.45,698 V702 Q198.45,707.05 203.5,707.05 H213.75 M220.9,685.35 V702.5 Q220.9,707.05 224.3,707.05 M232.05,712.25 V698 Q232.05,692.85 237,692.85 H244 Q248.95,692.85 248.95,698 V702 Q248.95,707.15 244,707.15 H232.05 M258,700.8 H270.25 V698 Q270.25,692.95 265.2,692.95 H260 Q254.95,692.95 254.95,698 V702 Q254.95,707.05 260,707.05 H270.25 M279.65,707.15 V698 Q279.65,692.85 284.7,692.85 H291.65" fill="none" stroke="#585E5E" stroke-width="6.8" stroke-linecap="square" mask="url(#wm)" shape-rendering="geometricPrecision"/>
<path d="M107,686.65 H114.45 Q121.45,686.65 121.45,693.65 V700.3 Q121.45,707.3 114.45,707.3 H107 Q99.95,707.3 99.95,700.3 V693.65 Q99.95,686.65 107,686.65 Z M149.95,686.65 H135.75 Q129.75,686.65 129.75,692 Q129.75,697.4 135.75,697.4 H144 Q149.95,697.4 149.95,702 Q149.95,706.75 144,706.75 H129.75" fill="none" stroke="rgba(242,104,133,0.88)" stroke-width="4.6" stroke-linecap="square" shape-rendering="geometricPrecision"/>
<path d="M169.15,686.85 V707.05 M189.2,686.85 V707.05 M169.15,697 H189.2 M201.5,700.8 H213.75 V698 Q213.75,692.95 208.7,692.95 H203.5 Q198.45,692.95 198.45,698 V702 Q198.45,707.05 203.5,707.05 H213.75 M220.9,685.35 V702.5 Q220.9,707.05 224.3,707.05 M232.05,712.25 V698 Q232.05,692.85 237,692.85 H244 Q248.95,692.85 248.95,698 V702 Q248.95,707.15 244,707.15 H232.05 M258,700.8 H270.25 V698 Q270.25,692.95 265.2,692.95 H260 Q254.95,692.95 254.95,698 V702 Q254.95,707.05 260,707.05 H270.25 M279.65,707.15 V698 Q279.65,692.85 284.7,692.85 H291.65" fill="none" stroke="rgba(255,255,255,0.82)" stroke-width="4.6" stroke-linecap="square" shape-rendering="geometricPrecision"/>
</svg>
</body></html>
